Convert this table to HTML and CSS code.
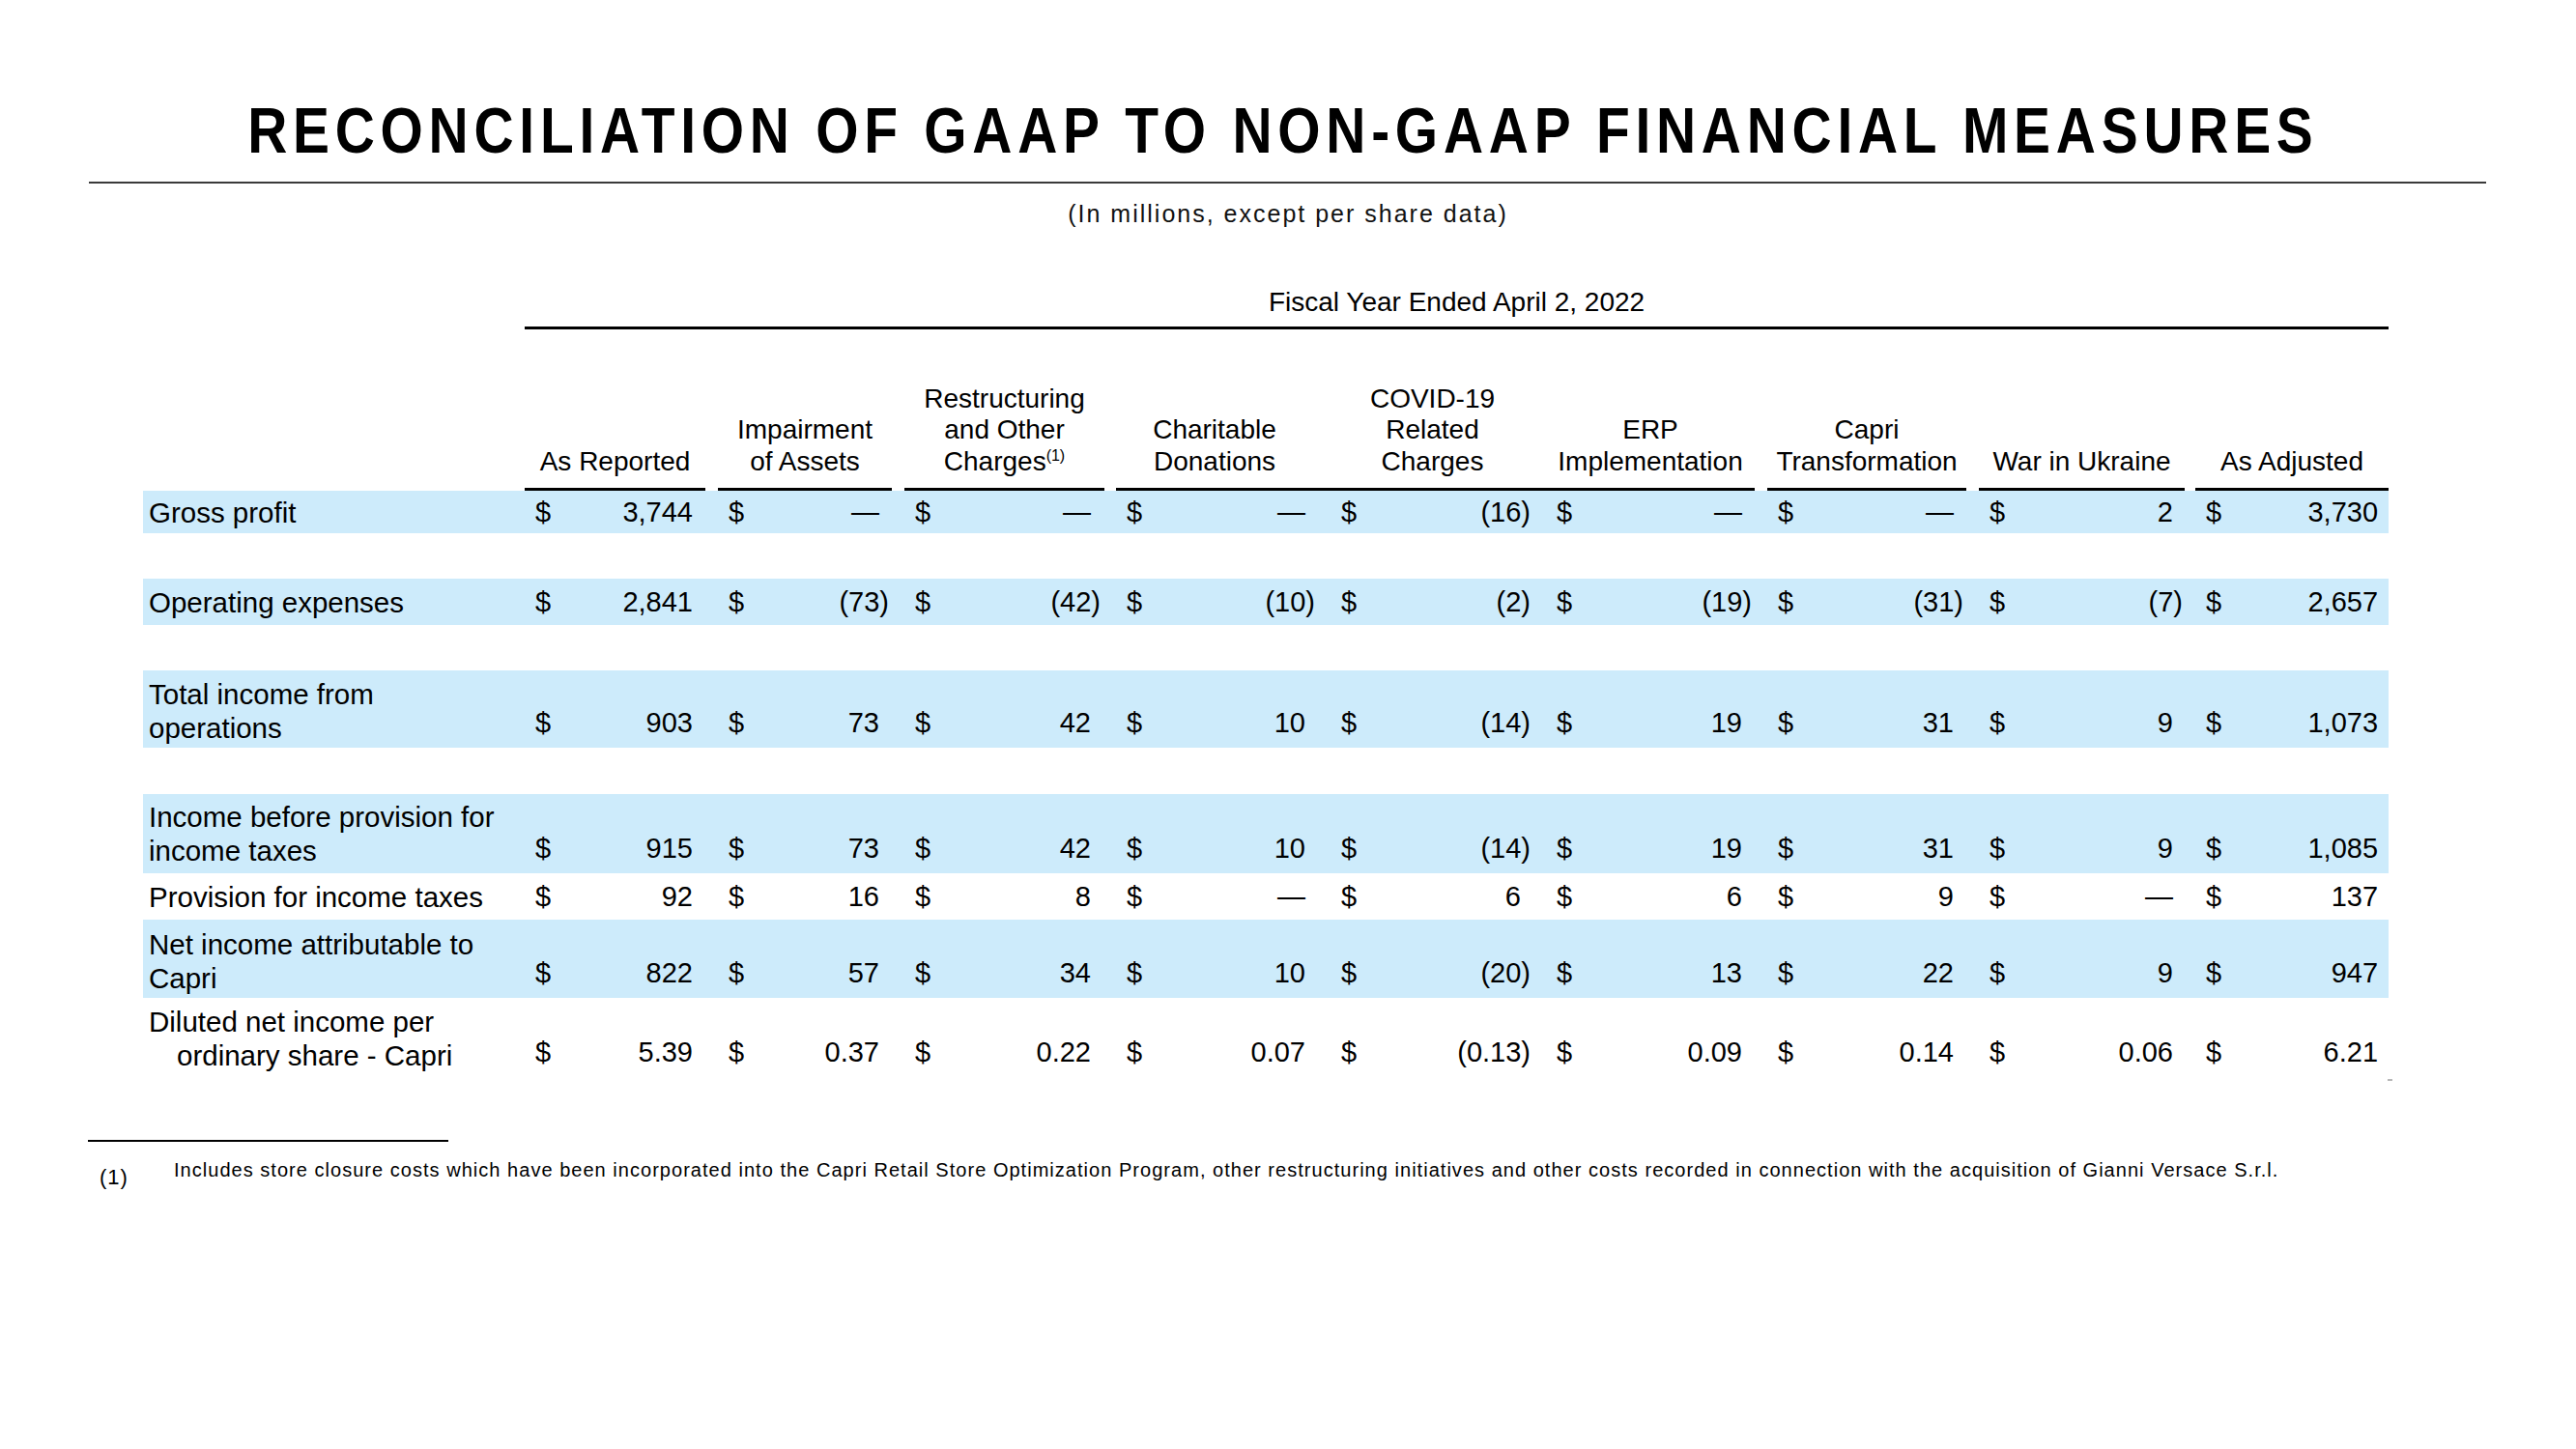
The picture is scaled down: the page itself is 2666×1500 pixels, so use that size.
FILE: index.html
```html
<!DOCTYPE html>
<html lang="en">
<head>
<meta charset="utf-8">
<title>Reconciliation of GAAP to Non-GAAP Financial Measures</title>
<link rel="stylesheet" href="styles.css">
</head>
<body>
<div class="page">
  <h1 class="title"><span class="title-text">RECONCILIATION OF GAAP TO NON-GAAP FINANCIAL MEASURES</span></h1>
  <div class="title-rule"></div>
  <p class="subtitle">(In millions, except per share data)</p>

  <table class="recon">
    <colgroup>
      <col class="c-label">
      <col class="c1"><col class="c2"><col class="c3"><col class="c4"><col class="c5">
      <col class="c6"><col class="c7"><col class="c8"><col class="c9">
    </colgroup>
    <thead>
      <tr class="fy-row">
        <th></th>
        <th colspan="9"><div class="fy">Fiscal Year Ended April 2, 2022</div></th>
      </tr>
      <tr class="head-row">
        <th></th>
        <th><div class="ch g13">As Reported</div></th>
        <th><div class="ch g13">Impairment<br>of Assets</div></th>
        <th><div class="ch g12">Restructuring<br>and Other<br>Charges<sup>(1)</sup></div></th>
        <th><div class="ch g0 pr18">Charitable<br>Donations</div></th>
        <th><div class="ch g0 pr12">COVID-19<br>Related<br>Charges</div></th>
        <th><div class="ch g13">ERP<br>Implementation</div></th>
        <th><div class="ch g13">Capri<br>Transformation</div></th>
        <th><div class="ch g11">War in Ukraine</div></th>
        <th><div class="ch g0">As Adjusted</div></th>
      </tr>
    </thead>
    <tbody>
      <tr class="hl one h44">
        <td class="label">Gross profit</td>
        <td><div class="amt"><span>$</span><span>3,744</span></div></td>
        <td><div class="amt"><span>$</span><span>—</span></div></td>
        <td><div class="amt"><span>$</span><span>—</span></div></td>
        <td><div class="amt"><span>$</span><span>—</span></div></td>
        <td><div class="amt"><span>$</span><span class="neg">(16)</span></div></td>
        <td><div class="amt"><span>$</span><span>—</span></div></td>
        <td><div class="amt"><span>$</span><span>—</span></div></td>
        <td><div class="amt"><span>$</span><span>2</span></div></td>
        <td><div class="amt"><span>$</span><span>3,730</span></div></td>
      </tr>
      <tr class="spacer"><td colspan="10"></td></tr>
      <tr class="hl one h48">
        <td class="label">Operating expenses</td>
        <td><div class="amt"><span>$</span><span>2,841</span></div></td>
        <td><div class="amt"><span>$</span><span class="neg">(73)</span></div></td>
        <td><div class="amt"><span>$</span><span class="neg">(42)</span></div></td>
        <td><div class="amt"><span>$</span><span class="neg">(10)</span></div></td>
        <td><div class="amt"><span>$</span><span class="neg">(2)</span></div></td>
        <td><div class="amt"><span>$</span><span class="neg">(19)</span></div></td>
        <td><div class="amt"><span>$</span><span class="neg">(31)</span></div></td>
        <td><div class="amt"><span>$</span><span class="neg">(7)</span></div></td>
        <td><div class="amt"><span>$</span><span>2,657</span></div></td>
      </tr>
      <tr class="spacer"><td colspan="10"></td></tr>
      <tr class="hl two h80">
        <td class="label">Total income from<br>operations</td>
        <td><div class="amt"><span>$</span><span>903</span></div></td>
        <td><div class="amt"><span>$</span><span>73</span></div></td>
        <td><div class="amt"><span>$</span><span>42</span></div></td>
        <td><div class="amt"><span>$</span><span>10</span></div></td>
        <td><div class="amt"><span>$</span><span class="neg">(14)</span></div></td>
        <td><div class="amt"><span>$</span><span>19</span></div></td>
        <td><div class="amt"><span>$</span><span>31</span></div></td>
        <td><div class="amt"><span>$</span><span>9</span></div></td>
        <td><div class="amt"><span>$</span><span>1,073</span></div></td>
      </tr>
      <tr class="spacer s48"><td colspan="10"></td></tr>
      <tr class="hl two h82 ibt">
        <td class="label">Income before provision for<br>income taxes</td>
        <td><div class="amt"><span>$</span><span>915</span></div></td>
        <td><div class="amt"><span>$</span><span>73</span></div></td>
        <td><div class="amt"><span>$</span><span>42</span></div></td>
        <td><div class="amt"><span>$</span><span>10</span></div></td>
        <td><div class="amt"><span>$</span><span class="neg">(14)</span></div></td>
        <td><div class="amt"><span>$</span><span>19</span></div></td>
        <td><div class="amt"><span>$</span><span>31</span></div></td>
        <td><div class="amt"><span>$</span><span>9</span></div></td>
        <td><div class="amt"><span>$</span><span>1,085</span></div></td>
      </tr>
      <tr class="one h48">
        <td class="label">Provision for income taxes</td>
        <td><div class="amt"><span>$</span><span>92</span></div></td>
        <td><div class="amt"><span>$</span><span>16</span></div></td>
        <td><div class="amt"><span>$</span><span>8</span></div></td>
        <td><div class="amt"><span>$</span><span>—</span></div></td>
        <td><div class="amt"><span>$</span><span>6</span></div></td>
        <td><div class="amt"><span>$</span><span>6</span></div></td>
        <td><div class="amt"><span>$</span><span>9</span></div></td>
        <td><div class="amt"><span>$</span><span>—</span></div></td>
        <td><div class="amt"><span>$</span><span>137</span></div></td>
      </tr>
      <tr class="hl two h81">
        <td class="label">Net income attributable to<br>Capri</td>
        <td><div class="amt"><span>$</span><span>822</span></div></td>
        <td><div class="amt"><span>$</span><span>57</span></div></td>
        <td><div class="amt"><span>$</span><span>34</span></div></td>
        <td><div class="amt"><span>$</span><span>10</span></div></td>
        <td><div class="amt"><span>$</span><span class="neg">(20)</span></div></td>
        <td><div class="amt"><span>$</span><span>13</span></div></td>
        <td><div class="amt"><span>$</span><span>22</span></div></td>
        <td><div class="amt"><span>$</span><span>9</span></div></td>
        <td><div class="amt"><span>$</span><span>947</span></div></td>
      </tr>
      <tr class="two h86 eps">
        <td class="label hang">Diluted net income per<br>ordinary share - Capri</td>
        <td><div class="amt"><span>$</span><span>5.39</span></div></td>
        <td><div class="amt"><span>$</span><span>0.37</span></div></td>
        <td><div class="amt"><span>$</span><span>0.22</span></div></td>
        <td><div class="amt"><span>$</span><span>0.07</span></div></td>
        <td><div class="amt"><span>$</span><span class="neg">(0.13)</span></div></td>
        <td><div class="amt"><span>$</span><span>0.09</span></div></td>
        <td><div class="amt"><span>$</span><span>0.14</span></div></td>
        <td><div class="amt"><span>$</span><span>0.06</span></div></td>
        <td class="last"><div class="amt"><span>$</span><span>6.21</span></div></td>
      </tr>
    </tbody>
  </table>

  <div class="footnotes">
    <div class="fn-rule"></div>
    <div class="fn">
      <span class="fn-mark">(1)</span>
      <span class="fn-text">Includes store closure costs which have been incorporated into the Capri Retail Store Optimization Program, other restructuring initiatives and other costs recorded in connection with the acquisition of Gianni Versace S.r.l.</span>
    </div>
  </div>
</div>
</body>
</html>
```

FILE: styles.css
```css
html, body {
  margin: 0;
  padding: 0;
  background: #ffffff;
}

body {
  font-family: "Liberation Sans", Arial, sans-serif;
  color: #000000;
  width: 2666px;
  height: 1500px;
  overflow: hidden;
}

.page {
  padding-top: 101px;
}

.title {
  margin: 0;
  font-family: "Liberation Sans", Arial, sans-serif;
  font-weight: 700;
  font-size: 67px;
  line-height: 67px;
  text-align: center;
  white-space: nowrap;
  padding-right: 10px;
}

.title-text {
  display: inline-block;
  letter-spacing: 6.75px;
  transform: scaleX(0.85);
  transform-origin: center;
}

.title-rule {
  margin: 20px 93px 0 92px;
  height: 0;
  border-top: 2px solid #3a3a3a;
}

.subtitle {
  margin: 16px 0 0 0;
  font-size: 25px;
  line-height: 30px;
  letter-spacing: 2px;
  text-align: center;
  color: #111;
}

/* ---------- table ---------- */
.recon {
  margin: 60px 0 0 148px;
  border-collapse: collapse;
  border-spacing: 0;
  table-layout: fixed;
  width: 2324px;
}

.c-label { width: 395px; }
.c1 { width: 200px; }
.c2 { width: 193px; }
.c3 { width: 219px; }
.c4 { width: 222px; }
.c5 { width: 223px; }
.c6 { width: 229px; }
.c7 { width: 219px; }
.c8 { width: 224px; }
.c9 { width: 200px; }

.recon th,
.recon td {
  padding: 0;
  font-weight: 400;
}

.fy {
  font-size: 28px;
  line-height: 34px;
  text-align: center;
  padding-bottom: 8px;
  border-bottom: 3px solid #000;
}

.head-row th {
  vertical-align: bottom;
  height: 167px;
}

.ch {
  font-size: 28px;
  line-height: 32.5px;
  text-align: center;
  padding-bottom: 11px;
  border-bottom: 3px solid #000;
}

.ch sup {
  font-size: 16px;
  line-height: 0;
  vertical-align: 10px;
}

.g13 { margin-right: 13px; }
.g12 { margin-right: 12px; }
.g11 { margin-right: 11px; }
.g0  { margin-right: 0; }
.pr18 { padding-right: 18px; }
.pr12 { padding-right: 12px; }

/* rows */
.hl td { background: #cdebfb; }

.h44 { height: 44px; }
.h48 { height: 48px; }
.h80 { height: 80px; }
.h81 { height: 81px; }
.h82 { height: 82px; }
.h86 { height: 86px; }

.spacer td { height: 47px; }
.spacer.s48 td { height: 48px; }

.label {
  font-size: 29.5px;
  line-height: 35px;
  padding-left: 6px !important;
  white-space: nowrap;
}

.hang {
  padding-left: 35px !important;
  text-indent: -29px;
}

.one td { vertical-align: middle; }

.two td { vertical-align: bottom; }
.two td.label { padding-bottom: 3px; }
.two td:not(.label) { padding-bottom: 8px; }
.ibt td.label { padding-bottom: 6px; }
.eps td.label { padding-bottom: 9px; }
.eps td:not(.label) { padding-bottom: 12px; }

.eps td.last { position: relative; }
.eps td.last::after {
  content: "";
  position: absolute;
  right: -4px;
  bottom: 0;
  width: 5px;
  height: 2px;
  background: #b8b8b8;
}

.amt {
  display: flex;
  justify-content: space-between;
  align-items: baseline;
  font-size: 29px;
  line-height: 35px;
  padding-left: 11px;
  padding-right: 26px;
}

.recon td:nth-child(9) .amt { padding-right: 23px; }
.recon td:nth-child(10) .amt { padding-right: 11px; }

.neg { margin-right: -10px; }

/* ---------- footnote ---------- */
.footnotes {
  margin-top: 61px;
}

.fn-rule {
  margin-left: 91px;
  width: 373px;
  border-top: 2px solid #000;
}

.fn {
  display: flex;
  align-items: flex-start;
  margin-top: 16px;
}

.fn-mark {
  width: 77px;
  padding-left: 103px;
  padding-top: 8px;
  font-size: 22px;
  line-height: 26px;
  letter-spacing: 1px;
}

.fn-text {
  font-size: 20px;
  line-height: 26px;
  letter-spacing: 1.03px;
  white-space: nowrap;
}
```
